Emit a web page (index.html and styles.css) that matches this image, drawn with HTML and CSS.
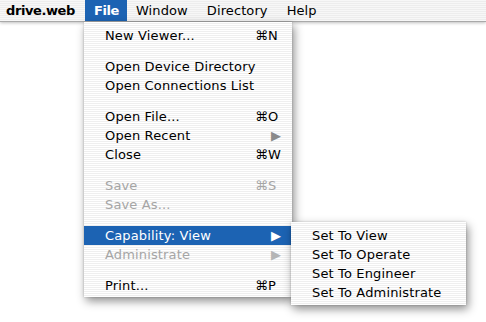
FILE: index.html
```html
<!DOCTYPE html>
<html>
<head>
<meta charset="utf-8">
<link rel="stylesheet" href="styles.css">
</head>
<body>
<div class="menubar">
  <div class="mb-item app">drive.web</div>
  <div class="mb-item active">File</div>
  <div class="mb-item">Window</div>
  <div class="mb-item">Directory</div>
  <div class="mb-item">Help</div>
</div>

<div class="menu file-menu">
  <div class="row"><span class="label">New Viewer...</span><span class="key">⌘N</span></div>
  <div class="sep"></div>
  <div class="row"><span class="label">Open Device Directory</span></div>
  <div class="row"><span class="label">Open Connections List</span></div>
  <div class="sep"></div>
  <div class="row"><span class="label">Open File...</span><span class="key">⌘O</span></div>
  <div class="row"><span class="label">Open Recent</span><span class="arrow">▶</span></div>
  <div class="row"><span class="label">Close</span><span class="key">⌘W</span></div>
  <div class="sep"></div>
  <div class="row disabled"><span class="label">Save</span><span class="key">⌘S</span></div>
  <div class="row disabled"><span class="label">Save As...</span></div>
  <div class="sep"></div>
  <div class="row selected"><span class="label">Capability: View</span><span class="arrow">▶</span></div>
  <div class="row disabled"><span class="label">Administrate</span><span class="arrow">▶</span></div>
  <div class="sep"></div>
  <div class="row"><span class="label">Print...</span><span class="key">⌘P</span></div>
</div>

<div class="menu sub-menu">
  <div class="row"><span class="label">Set To View</span></div>
  <div class="row"><span class="label">Set To Operate</span></div>
  <div class="row"><span class="label">Set To Engineer</span></div>
  <div class="row"><span class="label">Set To Administrate</span></div>
</div>
</body>
</html>
```

FILE: styles.css
```css
html, body {
  margin: 0;
  padding: 0;
  background: #ffffff;
  width: 486px;
  height: 322px;
  overflow: hidden;
  font-family: "DejaVu Sans", "Liberation Sans", sans-serif;
  font-size: 13px;
  color: #000;
}

.menubar {
  height: 21px;
  display: flex;
  align-items: stretch;
  background: repeating-linear-gradient(#f7f7f7 0 1px, #ededed 1px 2px);
  border-bottom: 1px solid #a9a9a9;
  box-shadow: 0 1px 3px rgba(0,0,0,0.25);
  position: relative;
  z-index: 1;
}

.mb-item {
  display: flex;
  align-items: center;
  padding: 0 10px 0 9px;
  font-size: 13px;
  letter-spacing: 0.1px;
}

.mb-item.app {
  font-weight: bold;
  letter-spacing: -0.4px;
  padding: 0 10px 0 6px;
}

.mb-item.active {
  background: #1c63b3;
  color: #fff;
  font-weight: bold;
  letter-spacing: -0.4px;
  padding: 0 8px 0 9px;
}

.menu {
  position: absolute;
  background: repeating-linear-gradient(#ffffff 0 1px, #efefef 1px 2px);
  box-shadow: 2px 4px 9px rgba(0,0,0,0.45), 0 0 2px rgba(0,0,0,0.2);
  z-index: 2;
}

.file-menu {
  left: 84px;
  top: 22px;
  width: 208px;
  padding: 4px 0 2px;
}

.sub-menu {
  left: 291px;
  top: 222px;
  width: 175px;
  padding: 4px 0 3px;
  z-index: 3;
}

.row {
  height: 19px;
  display: flex;
  align-items: center;
  padding: 0 12px 0 21px;
  white-space: nowrap;
  letter-spacing: 0.15px;
}

.label {
  flex: 1;
}

.key {
  width: 25px;
  letter-spacing: 0;
}

.arrow {
  width: 9px;
  font-size: 13px;
  line-height: 1;
  color: #8a8a8a;
}

.sep {
  height: 12px;
}

.disabled {
  color: #a5a5a5;
}

.disabled .arrow {
  color: #b5b5b5;
}

.selected {
  background: #1c63b3;
  color: #fff;
}

.selected .arrow {
  color: #fff;
}
```
